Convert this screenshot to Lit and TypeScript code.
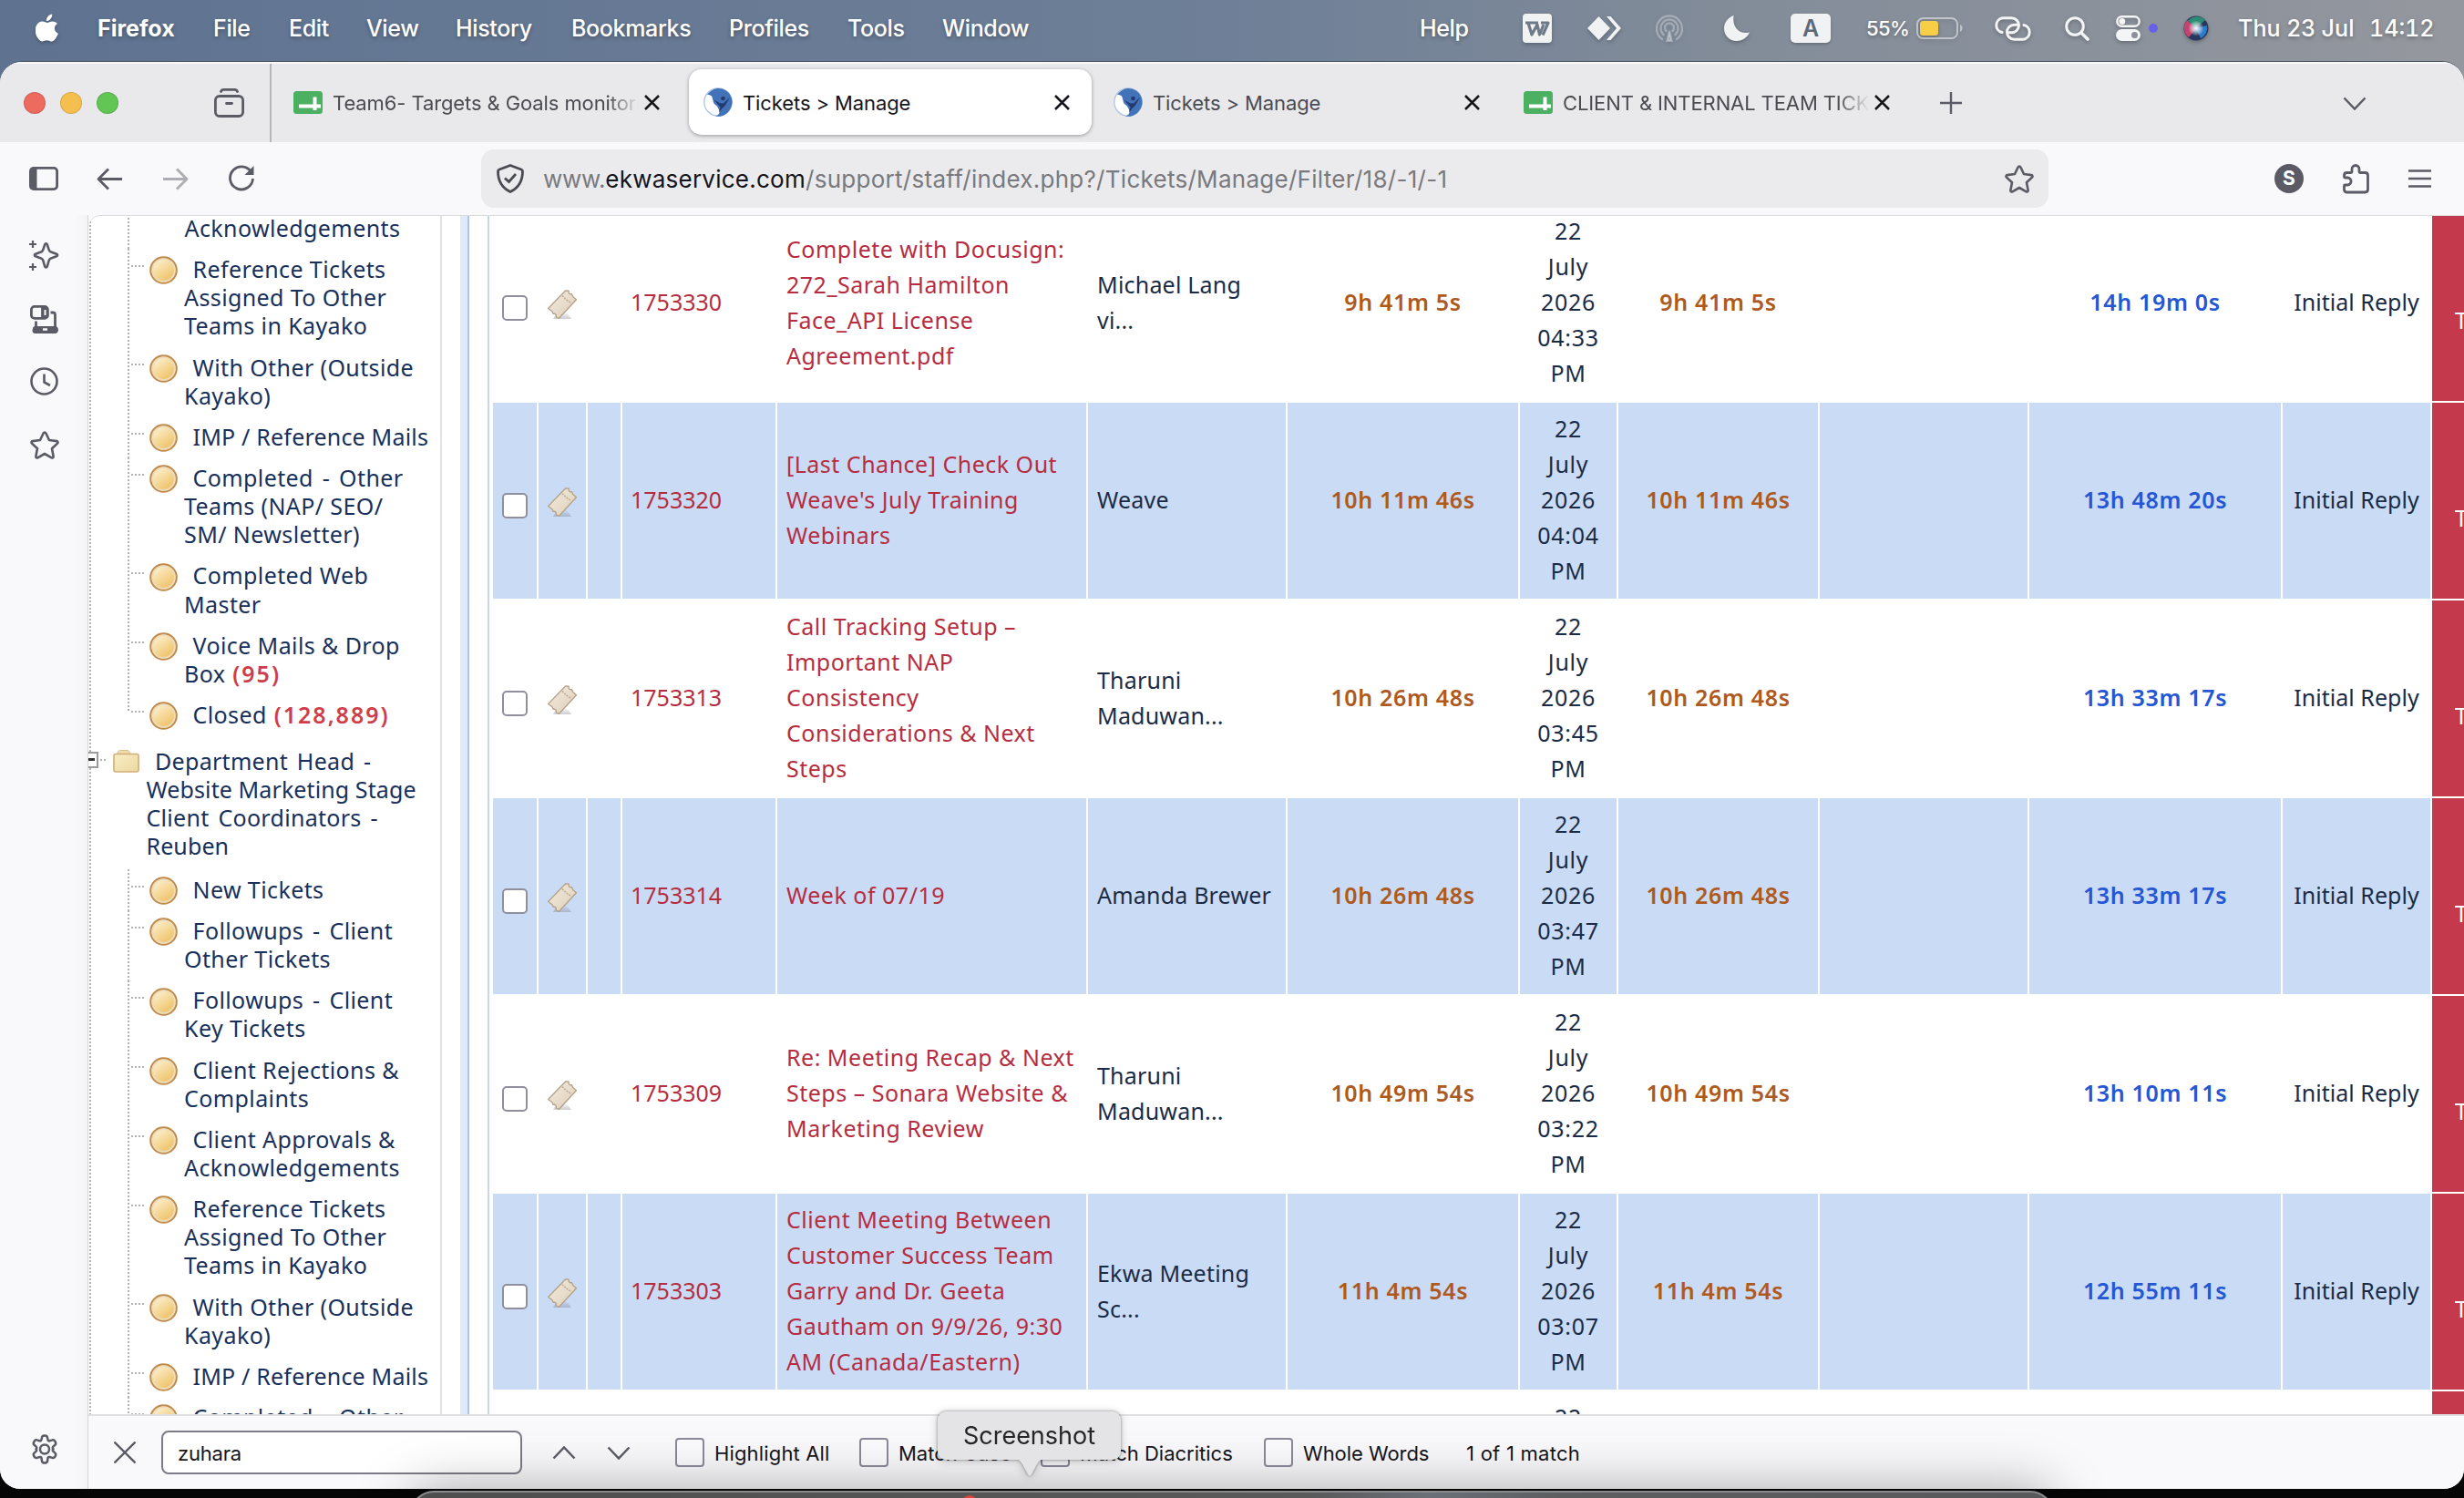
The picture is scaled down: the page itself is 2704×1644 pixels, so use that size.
import { LitElement, html, css, svg, nothing } from "lit";
import { customElement, property } from "lit/decorators.js";
import { classMap } from "lit/directives/class-map.js";
import { styleMap } from "lit/directives/style-map.js";

/* ---------- data ---------- */

interface Ticket {
  id?: string;
  subject?: string[];
  from?: string[];
  age?: string;
  time?: string;
  due?: string;
}

const TICKETS: Ticket[] = [
  { id: "1753330", subject: ["Complete with Docusign:", "272_Sarah Hamilton", "Face_API License", "Agreement.pdf"], from: ["Michael Lang", "vi..."], age: "9h 41m 5s", time: "04:33", due: "14h 19m 0s" },
  { id: "1753320", subject: ["[Last Chance] Check Out", "Weave's July Training", "Webinars"], from: ["Weave"], age: "10h 11m 46s", time: "04:04", due: "13h 48m 20s" },
  { id: "1753313", subject: ["Call Tracking Setup –", "Important NAP", "Consistency", "Considerations & Next", "Steps"], from: ["Tharuni", "Maduwan..."], age: "10h 26m 48s", time: "03:45", due: "13h 33m 17s" },
  { id: "1753314", subject: ["Week of 07/19"], from: ["Amanda Brewer"], age: "10h 26m 48s", time: "03:47", due: "13h 33m 17s" },
  { id: "1753309", subject: ["Re: Meeting Recap & Next", "Steps – Sonara Website &", "Marketing Review"], from: ["Tharuni", "Maduwan..."], age: "10h 49m 54s", time: "03:22", due: "13h 10m 11s" },
  { id: "1753303", subject: ["Client Meeting Between", "Customer Success Team", "Garry and Dr. Geeta", "Gautham on 9/9/26, 9:30", "AM (Canada/Eastern)"], from: ["Ekwa Meeting", "Sc..."], age: "11h 4m 54s", time: "03:07", due: "12h 55m 11s" },
  {},
];

interface TreeItem { lines: string[]; count?: string; last?: boolean; tail?: boolean; }

const FIRST_GROUP: TreeItem[] = [
  { lines: ["Acknowledgements"], tail: true },
  { lines: ["Reference Tickets", "Assigned To Other", "Teams in Kayako"] },
  { lines: ["With Other (Outside", "Kayako)"] },
  { lines: ["IMP / Reference Mails"] },
  { lines: ["Completed - Other", "Teams (NAP/ SEO/", "SM/ Newsletter)"] },
  { lines: ["Completed Web", "Master"] },
  { lines: ["Voice Mails & Drop", "Box"], count: "(95)" },
  { lines: ["Closed"], count: "(128,889)", last: true },
];

const SECOND_GROUP: TreeItem[] = [
  { lines: ["New Tickets"] },
  { lines: ["Followups - Client", "Other Tickets"] },
  { lines: ["Followups - Client", "Key Tickets"] },
  { lines: ["Client Rejections &", "Complaints"] },
  { lines: ["Client Approvals &", "Acknowledgements"] },
  { lines: ["Reference Tickets", "Assigned To Other", "Teams in Kayako"] },
  { lines: ["With Other (Outside", "Kayako)"] },
  { lines: ["IMP / Reference Mails"] },
  { lines: ["Completed - Other"] },
];

const MENUS: [string, number][] = [
  ["Firefox", 127], ["File", 83], ["Edit", 85], ["View", 98], ["History", 127],
  ["Bookmarks", 173], ["Profiles", 130], ["Tools", 104], ["Window", 110],
];

/* ---------- icons ---------- */

const box = (w: number, h: number, body: unknown) =>
  html`<svg width=${w} height=${h} viewBox="0 0 ${w} ${h}" fill="none">${body}</svg>`;

const icons = {
  apple: box(26, 32, svg`<path fill="#fff" d="M18.2 .6c.2 2-.6 3.8-1.700 5.200-1.200 1.400-2.900 2.400-4.600 2.300-.2-1.900.7-3.800 1.700-5C14.800 1.700 16.700.7 18.200.6zM24 10.900c-2 1.200-3.100 3-3.100 5.200 0 2.600 1.500 4.700 3.900 5.700-.5 1.600-1.300 3.200-2.300 4.700-1.400 2-2.800 4-5 4-2.100 0-2.700-1.200-5.100-1.200-2.400 0-3.200 1.200-5.200 1.200-2.100.1-3.700-2.100-5.100-4.200C-.600 22.200-1.200 16.200 1.200 12.500c1.500-2.400 3.900-3.900 6.300-3.900 2.300 0 3.800 1.300 5.200 1.300 1.500 0 3-1.500 5.900-1.500 2.100 0 4.200 1 5.400 2.500z"/>`),
  wps: box(32, 32, svg`<rect width="32" height="32" rx="4" fill="#f1f2f4"/><path d="M3 10h14M6 10l4 13 6-11 2.500 11L23 12M20 10h8l-6 13.500" stroke="#6f7a88" stroke-width="3.200" stroke-linejoin="round"/>`),
  diamond: box(37, 26, svg`<path fill="#f1f2f4" d="M12.500 0 25 13 12.500 26 0 13zM21 0h4.500L37 13 25.500 26H21l11-13z"/>`),
  hotspot: box(30, 30, svg`<g stroke="#fff" stroke-opacity=".3" stroke-width="2.400" stroke-linecap="round"><path d="M7 27a14 14 0 1 1 16 0M8.500 22a9.500 9.500 0 1 1 13 0M11.500 18a5 5 0 1 1 7 0"/><path d="m15 18 2.500 11h-5z" fill="#fff" fill-opacity=".3"/></g>`),
  moon: box(28, 28, svg`<path fill="#f1f2f4" d="M10.500 0C3.800 2.500 0 8 0 14.200 0 22 6 28 13.800 28 20 28 25.300 24.300 28 18.500 17 21.500 8.500 13 10.500 0z"/>`),
  battery: box(51, 24, svg`<rect x="1" y="1" width="44" height="22" rx="6.500" stroke="#fff" stroke-opacity=".5" stroke-width="2"/><rect x="4" y="4" width="20" height="16" rx="3.500" fill="#f8ce46"/><path d="M48 8c3.500 1.500 3.500 6.500 0 8z" fill="#fff" fill-opacity=".5"/>`),
  link: box(42, 27, svg`<g stroke="#f4f5f6" stroke-width="3" stroke-linecap="round"><path d="M9 17.500A8 8 0 0 1 9.500 1.800h10a8 8 0 0 1 0 16h-3.200"/><path d="M33 9.500a8 8 0 0 1-.5 15.700h-10a8 8 0 0 1 0-16h3.200"/></g>`),
  search: box(27, 27, svg`<circle cx="11" cy="11" r="9.300" stroke="#f4f5f6" stroke-width="3"/><path d="m18 18 7 7" stroke="#f4f5f6" stroke-width="3.600" stroke-linecap="round"/>`),
  toggles: box(27, 28, svg`<rect x="1.300" y="1.300" width="24.400" height="10.400" rx="5.200" stroke="#f4f5f6" stroke-width="2.400"/><circle cx="6.800" cy="6.500" r="3.500" fill="#f4f5f6"/><rect y="15" width="27" height="13" rx="6.500" fill="#f4f5f6"/><circle cx="20.500" cy="21.500" r="3.500" fill="#8b8f99"/>`),
  siri: box(28, 28, svg`<defs><radialGradient id="c" cx=".5" cy=".5" r=".5"><stop offset="0" stop-color="#fff"/><stop offset=".3" stop-color="#d8e9f5" stop-opacity=".85"/><stop offset="1" stop-color="#fff" stop-opacity="0"/></radialGradient></defs><circle cx="14" cy="14" r="13.500" fill="#27385f"/><path d="M14 14 4 5a13 13 0 0 0 2 19z" fill="#c8426f"/><path d="M14 14 5 6a13 13 0 0 1 19-1z" fill="#2e8a72"/><path d="m14 14 12-3a13 13 0 0 1-7 14z" fill="#2d7cc9"/><circle cx="14" cy="14" r="8.500" fill="url(#c)"/>`),
  archive: box(33, 32, svg`<g stroke="#5b5b66" stroke-width="2.800" stroke-linecap="round"><rect x="1.400" y="8.500" width="30.200" height="22" rx="4.500"/><path d="M7.500 3.500C8 2 9 1.400 10.500 1.400h12c1.500 0 2.500.6 3 2.100M13.500 16.500h6"/></g>`),
  sheet: box(32, 25, svg`<rect width="32" height="25" rx="3.500" fill="#4bb062"/><path d="M6 16.500h24M23.500 6.500v14.500" stroke="#fff" stroke-width="4"/>`),
  globe: box(32, 32, svg`<circle cx="16" cy="16" r="15.200" fill="#fff" stroke="#a9c0e3" stroke-width="1.200"/><path fill="#4273b9" d="M4 8.200C8.500 1.200 17-1.200 24 3c7.500 4.500 9.500 13.500 5.500 20.500C26.500 28.800 21.500 32 16 31.800c-1 0-2-.1-3-.4 2-.4 3.700-1.400 4.300-3.400.8-3-1-4.500-2-6.800-1.300-2.200-4-2.700-4.500-5.200-.3-2-.8-3-1.300-5.400C9 9 6.500 7.500 4 8.200z"/><path d="m11.500 13.500 6.500 3.800 4 .2 7-6.800-5 8.800-4 4-3 4 1.500-6z" fill="#223a70"/><circle cx="21.500" cy="12" r="2.300" fill="#223a70"/>`),
  close: box(17, 17, svg`<path d="m1 1 15 15M16 1 1 16" stroke="#15141a" stroke-width="2.500"/>`),
  plus: box(24, 24, svg`<path d="M12 0v24M0 12h24" stroke="#5b5b66" stroke-width="2.400"/>`),
  down: box(26, 15, svg`<path d="m1.500 1.500 11.500 12 11.500-12" stroke="#5b5b66" stroke-width="2.500"/>`),
  up: box(26, 15, svg`<path d="M1.500 13.500 13 1.500l11.500 12" stroke="#5b5b66" stroke-width="2.500"/>`),
  panel: box(32, 26, svg`<rect x="1.400" y="1.400" width="29.200" height="23.200" rx="3.500" stroke="#5b5b66" stroke-width="2.800"/><path d="M1 4a3 3 0 0 1 3-3h4.500v24H4a3 3 0 0 1-3-3z" fill="#5b5b66"/>`),
  back: box(29, 25, svg`<path d="M28 12.500H2M13 1.500l-11 11 11 11" stroke="#5b5b66" stroke-width="2.800" stroke-linejoin="round"/>`),
  forward: box(29, 25, svg`<path d="M1 12.500h26M16 1.500l11 11-11 11" stroke="#acacb2" stroke-width="2.800" stroke-linejoin="round"/>`),
  reload: box(30, 30, svg`<path d="M26.500 9.500A12.500 12.500 0 1 0 27.500 15" stroke="#5b5b66" stroke-width="2.800"/><path d="M28.500 1v10h-10z" fill="#5b5b66"/>`),
  shield: box(30, 32, svg`<path d="M15 1.500 27 6c1 .4 1.500 1 1.500 2 0 10-4 18-13.500 22.500C5.500 26 1.500 18 1.500 8c0-1 .5-1.600 1.500-2z" stroke="#4a4a52" stroke-width="2.800" stroke-linejoin="round"/><path d="m9 15.500 4.500 4L21 11" stroke="#4a4a52" stroke-width="2.800"/>`),
  star: box(32, 31, svg`<path d="M14.700 2.300c.6-1.100 2-1.100 2.600 0l3.700 7.700 8.200 1.100c1.300.2 1.700 1.700.8 2.500l-6 5.700 1.600 8.500c.2 1.200-1 2-2 1.500L16 25l-7.600 4.300c-1 .5-2.200-.3-2-1.500L8 19.300l-6-5.700c-.9-.8-.5-2.300.8-2.500L11 10z" stroke="#5b5b66" stroke-width="2.600" stroke-linejoin="round"/>`),
  puzzle: box(29, 33, svg`<path d="M4.500 9.500H9c.7 0 1-.4 1-1V5.500a4 4 0 0 1 8 0v3c0 .6.300 1 1 1h5.500c1.700 0 3 1.200 3 3v15.300c0 2-1.200 3.200-3 3.200h-20c-1.800 0-3-1.200-3-3v-4c0-.600.4-1 1-1h2.600a4 4 0 0 0 0-8H2.500c-.6 0-1-.4-1-1v-1.500c0-1.800 1.200-3 3-3z" stroke="#5b5b66" stroke-width="2.800"/>`),
  menu: box(25, 20, svg`<path d="M0 1.500h25M0 10h25M0 18.500h25" stroke="#5b5b66" stroke-width="2.500"/>`),
  sparkle: box(33, 33, svg`<path d="M18.500 3.200c.8 0 1.100.6 1.300 1.200l1.900 5.800c.4 1.200 1.200 2 2.300 2.300l6 2.200c1.500.6 1.500 2 0 2.600l-6 2.200c-1.100.4-1.900 1.100-2.300 2.300l-1.900 6.600c-.4 1.500-2.200 1.500-2.600 0l-1.900-6.600c-.4-1.200-1.200-1.900-2.300-2.300l-6-2.200c-1.500-.6-1.500-2 0-2.600l6-2.200c1.100-.3 1.900-1.100 2.300-2.300l1.900-5.800c.2-.6.500-1.200 1.300-1.200z" stroke="#5b5b66" stroke-width="2.600"/><path d="M4 0v8M0 4h8M4 25v8M0 29h8" stroke="#5b5b66" stroke-width="2.200"/>`),
  devices: box(31, 31, svg`<g stroke="#5b5b66" stroke-width="2.800"><rect x="1.400" y="1.400" width="18" height="13" rx="3.500"/><path d="M13.500 1v14M22.500 8H25a2.500 2.500 0 0 1 2.500 2.500V24M6.500 17.500V24"/></g><rect x="13" y="1.500" width="6.500" height="13" rx="3" fill="#5b5b66"/><rect x="15.500" y="5" width="2" height="6" fill="#f9f9fb"/><path d="M3 25.500c0-1.500 1-2.500 2.500-2.500h22c1.700 0 3.500 1.500 3.500 4 0 2.300-1.500 4-3.500 4h-22C3.500 31 2.500 29.500 2.500 28z" fill="#5b5b66"/><path d="M14 26.500h5" stroke="#f9f9fb" stroke-width="2.500"/>`),
  clock: box(31, 31, svg`<circle cx="15.500" cy="15.500" r="14" stroke="#5b5b66" stroke-width="2.600"/><path d="M15.500 7.500v9l6.500 3.500" stroke="#5b5b66" stroke-width="2.600"/>`),
  gear: box(32, 33, svg`<path d="M13 3.500c.4-2.700 5.600-2.700 6 0l.5 2.600c.2 1 1 1.500 2 1.200l2.800-.9c2.600-.9 5.200 3.600 3.100 5.300l-2.100 1.900c-.8.700-.8 1.700 0 2.400l.1.200c-.8.700-.8 1.800 0 2.500l2 1.900c2.100 1.800-.5 6.200-3.100 5.300l-2.800-.9c-1-.3-1.800.2-2 1.200l-.5 3.300c-.4 2.700-5.600 2.700-6 0l-.5-3.300c-.2-1-1-1.500-2-1.200l-2.800.9c-2.600.9-5.200-3.500-3.100-5.300l2-1.900c.8-.7.8-1.800 0-2.500l.1-.2c.8-.7.8-1.700 0-2.400l-2.100-1.900C2.500 10 5.100 5.500 7.700 6.400l2.800.9c1 .3 1.800-.2 2-1.200z" stroke="#5b5b66" stroke-width="2.500"/><circle cx="16" cy="16.500" r="5" stroke="#5b5b66" stroke-width="2.500"/>`),
  findClose: box(24, 24, svg`<path d="m.5.5 23 23M23.500.5l-23 23" stroke="#5b5b66" stroke-width="2.300"/>`),
  folder: box(29, 25, svg`<defs><linearGradient id="f" x1="0" y1="0" x2="1" y2="1"><stop offset="0" stop-color="#f8edc4"/><stop offset="1" stop-color="#ecd9a0"/></linearGradient></defs><path d="M4 5.500 6 1.500C6.300.8 7 .5 7.600.5h8.400c.8 0 1.400.4 1.700 1L19.500 5z" fill="#ecdcae" stroke="#d9bf8c"/><rect x="1" y="4.500" width="27" height="19.500" rx="2" fill="url(#f)" stroke="#d3ad76" stroke-width="1.600"/>`),
  bullet: box(31, 31, svg`<defs><linearGradient id="b" x1=".2" y1=".1" x2=".8" y2=".95"><stop offset="0" stop-color="#fbecc8"/><stop offset=".5" stop-color="#f5d795"/><stop offset="1" stop-color="#eec066"/></linearGradient></defs><circle cx="15.500" cy="15.500" r="14.300" fill="#f3dcae" stroke="#c08a4c" stroke-width="2"/><circle cx="15.500" cy="15.500" r="12.200" fill="url(#b)" stroke="#ecdcbc" stroke-width="1.600"/>`),
  ticket: box(32, 32, svg`<defs><linearGradient id="t" x1="0" y1="0" x2="1" y2="1"><stop offset="0" stop-color="#f5ecdf"/><stop offset="1" stop-color="#dccdb9"/></linearGradient><linearGradient id="s" x1="0" y1="0" x2="0" y2="1"><stop offset="0" stop-color="#70707a" stop-opacity="0"/><stop offset="1" stop-color="#70707a" stop-opacity=".35"/></linearGradient></defs><path d="M6 32c2-5 6-8 10-8s7 3 10 8z" fill="url(#s)"/><path d="M.6 20.500 19.800.8l3.400.4c-.6 2.600 1 4 3.200 3.400l1.300 2.900 3.800 3.200L12.500 31.300l-3.300-1.300c.8-2.700-.8-4.200-3-3.600l-1.300-2.700z" fill="url(#t)" stroke="#b3a188" stroke-width="1.300" stroke-linejoin="round"/><path d="m16 6.500 4.500 4.500 5.500 3.500" stroke="#bba890" stroke-width="1.400" stroke-dasharray="2 1.200"/>`),
};

/* ---------- macOS menu bar ---------- */

@customElement("mac-menu-bar")
class MacMenuBar extends LitElement {
  static styles = css`
    :host { display: flex; align-items: center; height: 67px; box-sizing: border-box; padding: 0 34px 5px 39px;
      font: 500 25px/30px Inter, sans-serif; letter-spacing: -0.35px; color: #fff; white-space: pre;
      text-shadow: 0 2px 4px rgba(0, 0, 0, .3); }
    svg { display: block; filter: drop-shadow(0 2px 2px rgba(0, 0, 0, .25)); flex: none; }
    .apple { margin-right: 42px; }
    .item { flex: none; }
    .item:first-of-type { font-weight: 700; letter-spacing: 0; }
    .spacer { flex: 1; }
    .status { display: flex; align-items: center; }
    .help { width: 113px; }
    .wps { margin-right: 39px; } .diamond { margin-right: 38px; } .hotspot { margin-right: 45px; }
    .moon { margin-right: 45px; }
    .input { width: 44px; height: 32px; border-radius: 5px; background: #f1f2f4; color: #5f6876; font-size: 25px; font-weight: 600;
      line-height: 33px; text-align: center; text-shadow: none; margin-right: 39px; box-shadow: 0 2px 3px rgba(0, 0, 0, .2); }
    .pct { font-size: 22px; letter-spacing: -0.6px; width: 55px; }
    .battery { margin-right: 34px; } .link { margin-right: 36px; } .search { margin-right: 29px; } .toggles { margin-right: 9px; }
    .dot { width: 10px; height: 10px; border-radius: 50%; background: #6561e8; margin-right: 28px; }
    .siri { margin-right: 32px; }
    .date { width: 144px; letter-spacing: 0.1px; }
    .time { font-variant-numeric: tabular-nums; letter-spacing: 0; width: 70px; }
  `;
  render() {
    return html`
      <span class="apple">${icons.apple}</span>
      ${MENUS.map(([label, w]) => html`<div class="item" style=${styleMap({ width: `${w}px` })}>${label}</div>`)}
      <span class="spacer"></span>
      <div class="status">
        <span class="help">Help</span>
        <span class="wps">${icons.wps}</span><span class="diamond">${icons.diamond}</span>
        <span class="hotspot">${icons.hotspot}</span><span class="moon">${icons.moon}</span>
        <span class="input">A</span><span class="pct">55%</span><span class="battery">${icons.battery}</span>
        <span class="link">${icons.link}</span><span class="search">${icons.search}</span>
        <span class="toggles">${icons.toggles}</span><span class="dot"></span><span class="siri">${icons.siri}</span>
        <span class="date">Thu 23 Jul</span><span class="time">14:12</span>
      </div>`;
  }
}

/* ---------- tab strip and toolbar ---------- */

@customElement("tab-strip")
class TabStrip extends LitElement {
  static styles = css`
    :host { display: flex; height: 88px; background: #e9e9eb; box-sizing: border-box; border-top: 2px solid #f8f8f9; }
    svg { display: block; flex: none; }
    .lead { display: flex; align-items: center; width: 298px; box-sizing: border-box; padding-left: 26px; border-right: 2px solid #b6b6b9; gap: 16px; }
    .light { width: 24px; height: 24px; border-radius: 50%; box-sizing: border-box; border: 1px solid rgba(0, 0, 0, .12); }
    .red { background: #ed6a5f; } .amber { background: #f5bf4f; } .green { background: #61c654; margin-right: 89px; }
    .tabs { display: flex; gap: 8px; padding: 6px 0 0 8px; }
    .tab { width: 442px; height: 72px; box-sizing: border-box; border-radius: 14px; display: flex; align-items: center; padding: 0 24px 0 16px;
      font: 400 22px/30px Inter, sans-serif; letter-spacing: -0.1px; color: #4b4b52; white-space: nowrap; }
    .active { background: #fff; color: #15141a; box-shadow: 0 1px 4px rgba(0, 0, 0, .35); }
    .label { flex: 1; min-width: 0; margin: 0 6px 0 11px; padding-top: 1px; overflow: hidden; }
    .fade { -webkit-mask-image: linear-gradient(to right, #000 calc(100% - 34px), transparent); mask-image: linear-gradient(to right, #000 calc(100% - 34px), transparent); }
    .tools { display: flex; flex: 1; align-items: center; justify-content: space-between; padding: 0 107px 0 31px; }
  `;
  render() {
    const tab = (icon: unknown, label: string, active = false, fade = false) => html`
      <div class=${classMap({ tab: true, active })}>${icon}<span class=${classMap({ label: true, fade })}>${label}</span>${icons.close}</div>`;
    return html`
      <div class="lead"><i class="light red"></i><i class="light amber"></i><i class="light green"></i>${icons.archive}</div>
      <div class="tabs">
        ${tab(icons.sheet, "Team6- Targets & Goals monitoring", false, true)}
        ${tab(icons.globe, "Tickets > Manage", true)}
        ${tab(icons.globe, "Tickets > Manage")}
        ${tab(icons.sheet, "CLIENT & INTERNAL TEAM TICKETS", false, true)}
      </div>
      <div class="tools">${icons.plus}${icons.down}</div>`;
  }
}

@customElement("nav-toolbar")
class NavToolbar extends LitElement {
  static styles = css`
    :host { display: flex; align-items: center; height: 80px; box-sizing: border-box; padding: 0 36px 0 32px; background: #f9f9fb; }
    svg { display: block; flex: none; }
    .nav { display: flex; align-items: center; width: 496px; }
    .nav span:nth-child(1) { margin-right: 42px; } .nav span:nth-child(2) { margin-right: 43px; } .nav span:nth-child(3) { margin-right: 43px; }
    .url { width: 1720px; height: 64px; box-sizing: border-box; border-radius: 14px; background: #ebebed; display: flex; align-items: center; padding: 0 16px 0 17px; }
    .text { flex: 1; margin-left: 21px; font: 400 26px/34px Inter, sans-serif; letter-spacing: 0.28px; color: #79797e; white-space: nowrap; padding-top: 2px; }
    .host { color: #15141a; letter-spacing: 0.25px; }
    .www { letter-spacing: -0.3px; }
    .right { display: flex; flex: 1; align-items: center; justify-content: flex-end; gap: 43px; }
    .avatar { width: 32px; height: 32px; border-radius: 50%; background: #5b5b66; color: #fff; font: 700 21px/32px Inter, sans-serif; text-align: center; }
  `;
  render() {
    return html`
      <div class="nav"><span>${icons.panel}</span><span>${icons.back}</span><span>${icons.forward}</span><span>${icons.reload}</span></div>
      <div class="url">${icons.shield}<div class="text"><span class="www">www.</span><span class="host">ekwaservice.com</span>/support/staff/index.php?/Tickets/Manage/Filter/18/-1/-1</div>${icons.star}</div>
      <div class="right"><div class="avatar">S</div>${icons.puzzle}${icons.menu}</div>`;
  }
}

/* ---------- filter tree ---------- */

@customElement("filter-tree")
class FilterTree extends LitElement {
  static styles = css`
    :host { display: block; width: 386px; flex: none; box-sizing: border-box; padding-left: 1px; overflow: hidden;
      font: 400 25px/31.2px "Noto Sans", sans-serif; letter-spacing: 0.4px; color: #17305c; white-space: nowrap; }
    svg { display: block; flex: none; }
    .trunk { background: repeating-linear-gradient(to bottom, #b2b2b2 0 2px, #fff 2px 4px) 0 0 / 2px 100% no-repeat; margin-top: -2px; }
    .item { display: flex; align-items: flex-start; padding-left: 42px; }
    .rail { width: 2px; align-self: stretch; flex: none; background: repeating-linear-gradient(to bottom, #b2b2b2 0 2px, #fff 2px 4px); }
    .last .rail { align-self: flex-start; height: 20px; }
    .dash { width: 16px; height: 2px; flex: none; margin: 18px 6px 0 0; background: repeating-linear-gradient(to right, #fff 0 2px, #b2b2b2 2px 4px); }
    .bullet { margin: 8px 0 0 -0.500px; width: 31px; flex: none; }
    .text { padding: 6.700px 0 7.200px 7.500px; text-indent: 9.500px; }
    .text div + div { text-indent: 0; }
    .hyphen { word-spacing: 3px; }
    .slash { letter-spacing: 0.200px; }
    .tail .text { padding-top: 0; margin-left: 53px; text-indent: 0; }
    .count { color: #cf3d4b; font-weight: 600; letter-spacing: 2px; margin-left: 1px; }
    .folder { display: flex; align-items: flex-start; padding: 12.500px 0 9.500px; }
    .toggle { width: 9px; height: 14px; flex: none; margin: 5px 0 0 -1px; border: 2px solid #9b9b9b; border-left: 0; background: #fff; display: flex; align-items: center; }
    .toggle::before { content: ""; width: 7px; height: 3px; background: #333; }
    .folder .dash { width: 8px; margin: 13px 8px 0 0; }
    .folder .icon { margin-top: 3px; }
    .folder .text { padding: 0 0 0 7.500px; }
    .folder .text div { letter-spacing: 0.1px; }
    .folder .text .hyphen { letter-spacing: 0.3px; }
  `;
  private lineClass(l: string) {
    return classMap({ hyphen: l.includes(" -"), slash: l.includes(" / ") });
  }
  private item(it: TreeItem) {
    const text = html`<div class="text">${it.lines.map((l, i) => html`<div class=${this.lineClass(l)}>${l}${it.count && i === it.lines.length - 1 ? html` <span class="count">${it.count}</span>` : nothing}</div>`)}</div>`;
    return html`<div class=${classMap({ item: true, last: !!it.last, tail: !!it.tail })}>
      <i class="rail"></i>${it.tail ? nothing : html`<i class="dash"></i><span class="bullet">${icons.bullet}</span>`}${text}</div>`;
  }
  render() {
    return html`<div class="trunk">
      ${FIRST_GROUP.map((i) => this.item(i))}
      <div class="folder"><i class="toggle"></i><i class="dash"></i><span class="icon">${icons.folder}</span>
        <div class="text">${["Department Head -", "Website Marketing Stage", "Client Coordinators -", "Reuben"].map((l) => html`<div class=${this.lineClass(l)}>${l}</div>`)}</div>
      </div>
      ${SECOND_GROUP.map((i) => this.item(i))}
    </div>`;
  }
}

/* ---------- ticket grid ---------- */

@customElement("ticket-grid")
class TicketGrid extends LitElement {
  static styles = css`
    :host { display: block; flex: 1; min-width: 0; overflow: hidden; margin-top: -12px;
      font: 400 25px/39px "Noto Sans", sans-serif; letter-spacing: 0.2px; color: #1a2b46; white-space: pre; }
    svg { display: block; }
    .row { display: grid; grid-template-columns: 48px 52px 36px 168px 339px 217px 253px 106px 219px 228px 276px 162px 35px; column-gap: 2px; height: 215px; margin-bottom: 2px; }
    .cell { display: flex; flex-direction: column; justify-content: center; overflow: hidden; padding-bottom: 2px; }
    .alt .cell { background: #cadbf5; }
    .center { align-items: center; }
    .left { padding-left: 10px; letter-spacing: 0.500px; }
    .from { padding-left: 10px; }
    .red { color: #b62d41; }
    .row .id { letter-spacing: 0; padding-left: 9px; }
    .date { letter-spacing: 0.700px; }
    .age, .due { font-weight: 600; letter-spacing: 0.650px; }
    .age { color: #ae5a1e; }
    .due { color: #2457d3; }
    .check { width: 28px; height: 28px; box-sizing: border-box; border: 2px solid #8f8f9d; border-radius: 5px; background: #fff; margin: 12px 0 0 10px; }
    .tick { margin: 5px 0 0 10px; }
    .row .team { background: #c5394d; color: #fff; padding-left: 25px; }
    .type { letter-spacing: 0.050px; }
  `;
  private row(t: Ticket, i: number) {
    const has = !!t.id;
    const lines = (l?: string[]) => (l ?? []).map((x) => html`<div>${x}</div>`);
    return html`<div class=${classMap({ row: true, alt: i % 2 === 1 })}>
      <div class="cell">${has ? html`<div class="check"></div>` : nothing}</div>
      <div class="cell">${has ? html`<div class="tick">${icons.ticket}</div>` : nothing}</div>
      <div class="cell"></div>
      <div class="cell left red id">${t.id}</div>
      <div class="cell left red">${lines(t.subject)}</div>
      <div class="cell from">${lines(t.from)}</div>
      <div class="cell center age">${t.age}</div>
      <div class="cell center date">${lines(["22", has ? "July" : " ", has ? "2026" : " ", t.time ?? " ", has ? "PM" : " "])}</div>
      <div class="cell center age">${t.age}</div>
      <div class="cell"></div>
      <div class="cell center due">${t.due}</div>
      <div class="cell center type">${has ? "Initial Reply" : ""}</div>
      <div class="cell team">${has ? lines([" ", "T"]) : nothing}</div>
    </div>`;
  }
  render() { return html`${TICKETS.map((t, i) => this.row(t, i))}`; }
}

/* ---------- find bar ---------- */

@customElement("find-bar")
class FindBar extends LitElement {
  static styles = css`
    :host { display: flex; align-items: center; height: 82px; flex: none; box-sizing: border-box; border-top: 2px solid #e0e0e2; padding-left: 28px; background: #f9f9fb;
      font: 400 22px/30px Inter, sans-serif; color: #15141a; white-space: nowrap; }
    svg { display: block; flex: none; }
    .field { width: 396px; height: 48px; box-sizing: border-box; border: 2px solid #7c7c88; border-radius: 8px; background: #fff; margin: 0 33px 0 28px; padding-left: 16px; line-height: 46px; letter-spacing: -0.200px; }
    .next { margin: 0 49px 0 34px; }
    .option { display: flex; align-items: center; gap: 11px; }
    .check { width: 32px; height: 32px; box-sizing: border-box; border: 2px solid #8a8a98; border-radius: 4px; background: #fbfbfd; }
    .all { width: 202px; letter-spacing: 0.150px; } .case { width: 199px; } .dia { width: 245px; } .words { width: 222px; letter-spacing: -0.050px; }
    .result { letter-spacing: 0.250px; }
    .option span, .result { padding-top: 1px; }
  `;
  render() {
    const option = (cls: string, label: string) => html`<div class="option ${cls}"><i class="check"></i><span>${label}</span></div>`;
    return html`${icons.findClose}<div class="field">zuhara</div>${icons.up}<span class="next">${icons.down}</span>
      ${option("all", "Highlight All")}${option("case", "Match Case")}${option("dia", "Match Diacritics")}${option("words", "Whole Words")}
      <div class="result">1 of 1 match</div>`;
  }
}

/* ---------- dock tooltip ---------- */

@customElement("dock-tooltip")
class DockTooltip extends LitElement {
  @property() label = "";
  static styles = css`
    :host { display: block; width: 201px; height: 72px; filter: drop-shadow(0 0 1.500px rgba(0, 0, 0, .4)) drop-shadow(0 1px 5px rgba(0, 0, 0, .2)); }
    .bubble { height: 53px; border-radius: 9px; background: #e4e4e6; font: 400 27px/54px Inter, sans-serif; color: #262628; text-align: center; }
    svg { display: block; margin: -1px auto 0; }
  `;
  render() {
    return html`<div class="bubble">${this.label}</div>
      ${box(32, 20, svg`<path d="M0 0h32c-4 0-6 3-8 6l-6 11c-1 2-3 2-4 0L8 6C6 3 4 0 0 0z" fill="#e4e4e6"/>`)}`;
  }
}

/* ---------- root ---------- */

@customElement("app-root")
class AppRoot extends LitElement {
  static styles = css`
    :host { display: block; width: 2704px; height: 1644px; position: relative; overflow: hidden;
      background: linear-gradient(to right, #5f7391, #6e7f97 50%, #828c99 70%, #94979e) 0 0 / 100% 200px no-repeat, #060606; }
    .window { width: 2704px; height: 1567px; box-sizing: border-box; border-top: 1px solid #4f5966; border-radius: 24px 24px 22px 22px; overflow: hidden; background: #f9f9fb; }
    .body { display: grid; grid-template-columns: 96px 1fr; height: 1398px; }
    .strip { display: flex; flex-direction: column; align-items: center; padding: 28px 0 27px 1px; box-sizing: border-box; background: linear-gradient(to right, #f9f9fb 85%, #f3f3f5); }
    .strip svg { display: block; flex: none; }
    .strip .a { margin-bottom: 38px; } .strip .b { margin-bottom: 37px; } .strip .c { margin-bottom: 39px; } .strip .gear { margin-top: auto; }
    .main { display: flex; flex-direction: column; min-width: 0; border-left: 1px solid #d7d7d9; }
    .page { display: flex; height: 1316px; border-top: 1px solid #dcdcde; box-sizing: border-box; background: #fff; overflow: hidden; border-top-left-radius: 14px; }
    .edge { width: 2px; background: #e4e4e4; margin-right: 20px; flex: none; }
    .splitter { width: 8px; background: #dfeafc; border-right: 2px solid #adc5e7; margin-right: 20px; flex: none; }
    .frame { width: 2px; background: #c6d7ef; margin-right: 4px; flex: none; }
    .dock { position: absolute; left: 450px; top: 1636px; width: 1804px; height: 60px; border-radius: 26px; box-sizing: border-box; border: 2px solid #8a8a8c;
      background: linear-gradient(to right, #4e4e4e, #5a5a5b 55%, #6b7078 62%, #5c5e60 70%, #58595a); box-shadow: 0 0 60px rgba(0, 0, 0, .34); }
    .badge { position: absolute; left: 1055px; top: 1641px; width: 18px; height: 18px; border-radius: 50%; background: #d8463c; }
    .tip { position: absolute; left: 1029px; top: 1549px; }
  `;
  render() {
    return html`
      <mac-menu-bar></mac-menu-bar>
      <div class="window">
        <tab-strip></tab-strip>
        <nav-toolbar></nav-toolbar>
        <div class="body">
          <div class="strip"><span class="a">${icons.sparkle}</span><span class="b">${icons.devices}</span><span class="c">${icons.clock}</span><span>${icons.star}</span><span class="gear">${icons.gear}</span></div>
          <div class="main">
            <div class="page">
              <filter-tree></filter-tree>
              <i class="edge"></i><i class="splitter"></i><i class="frame"></i>
              <ticket-grid></ticket-grid>
            </div>
            <find-bar></find-bar>
          </div>
        </div>
      </div>
      <div class="dock"></div><div class="badge"></div>
      <dock-tooltip class="tip" label="Screenshot"></dock-tooltip>`;
  }
}
